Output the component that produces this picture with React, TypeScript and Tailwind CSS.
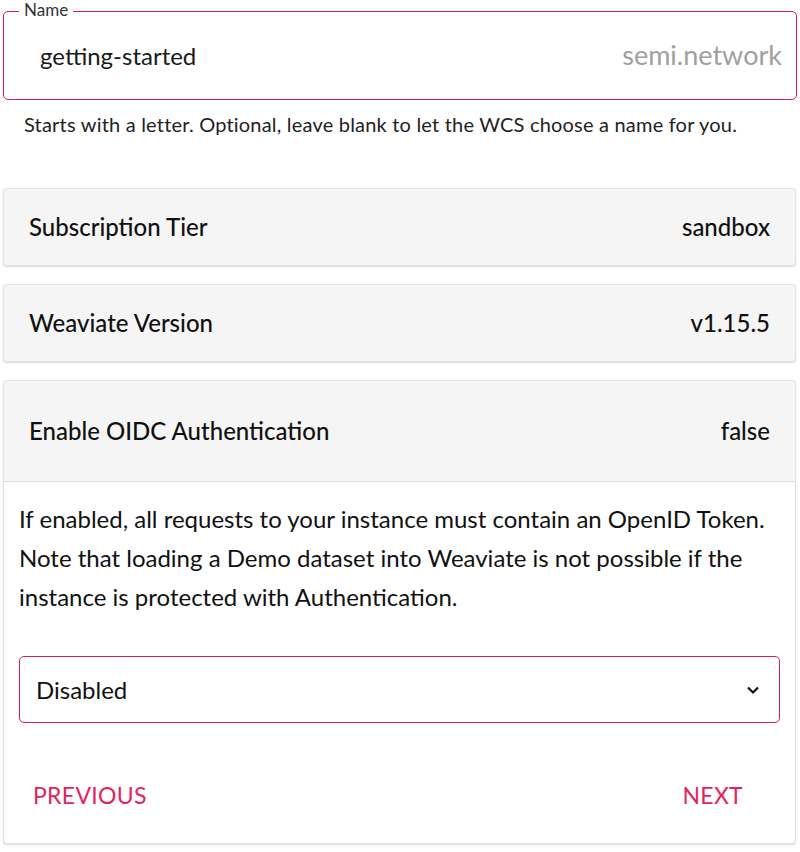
import React from "react";

const font = { fontFamily: "Lato, 'Open Sans', sans-serif" };

function Row({ label, value, h }: { label: string; value: string; h: string }) {
  return (
    <div className={`flex items-center justify-between rounded-[4px] border border-[#e2e2e2] bg-[#f5f5f5] px-[25px] shadow-[0_1px_2px_rgba(0,0,0,0.15)] ${h}`}>
      <span className="text-[24px] font-medium text-[#111]">{label}</span>
      <span className="text-[24px] font-medium text-[#111]">{value}</span>
    </div>
  );
}

export default function App() {
  return (
    <div className="w-[800px] h-[852px] bg-white px-[3px] pt-[11px]" style={font}>
      <div className="relative">
        <div className="flex h-[89px] items-center justify-between rounded-[5px] border border-[#d81b60] pl-[36px] pr-[14px]">
          <span className="text-[24px] text-[#1a1a1a]">getting-started</span>
          <span className="text-[27px] text-[#a0a0a0]">semi.network</span>
        </div>
        <span className="absolute left-[16px] top-[-11px] bg-white px-[5px] text-[17px] leading-[20px] text-[#333]">Name</span>
      </div>
      <p className="ml-[21px] mt-[12px] text-[20px] leading-[24px] tracking-[0.2px] text-[#222]">
        Starts with a letter. Optional, leave blank to let the WCS choose a name for you.
      </p>

      <div className="mt-[52px] flex flex-col gap-[18px] pr-[1px]">
        <Row label="Subscription Tier" value="sandbox" h="h-[78px]" />
        <Row label="Weaviate Version" value="v1.15.5" h="h-[78px]" />
        <div className="overflow-hidden rounded-[4px] border border-[#e2e2e2] bg-white shadow-[0_1px_2px_rgba(0,0,0,0.15)]">
          <div className="flex h-[101px] items-center justify-between border-b border-[#dcdcdc] bg-[#f5f5f5] px-[25px]">
            <span className="text-[24px] font-medium text-[#111]">Enable OIDC Authentication</span>
            <span className="text-[24px] font-medium text-[#111]">false</span>
          </div>
          <div className="px-[15px] pt-[17px]">
            <p className="text-[24px] leading-[39px] text-[#111]">
              If enabled, all requests to your instance must contain an OpenID Token. Note that loading a Demo dataset into Weaviate is not possible if the instance is protected with Authentication.
            </p>
            <div className="mt-[40px] flex h-[67px] items-center justify-between rounded-[5px] border border-[#d81b60] pl-[16px] pr-[19px]">
              <span className="text-[24px] text-[#111]">Disabled</span>
              <svg width="14" height="10" viewBox="0 0 14 10" fill="none">
                <path d="M2 2.5 L7 7.5 L12 2.5" stroke="#111" strokeWidth="2.2" />
              </svg>
            </div>
            <div className="flex h-[120px] items-center justify-between pl-[14px] pr-[37px] pt-[25px]">
              <span className="text-[23px] tracking-[0.3px] text-[#e3245c]">PREVIOUS</span>
              <span className="text-[23px] tracking-[0.3px] text-[#e3245c]">NEXT</span>
            </div>
          </div>
        </div>
      </div>
    </div>
  );
}
